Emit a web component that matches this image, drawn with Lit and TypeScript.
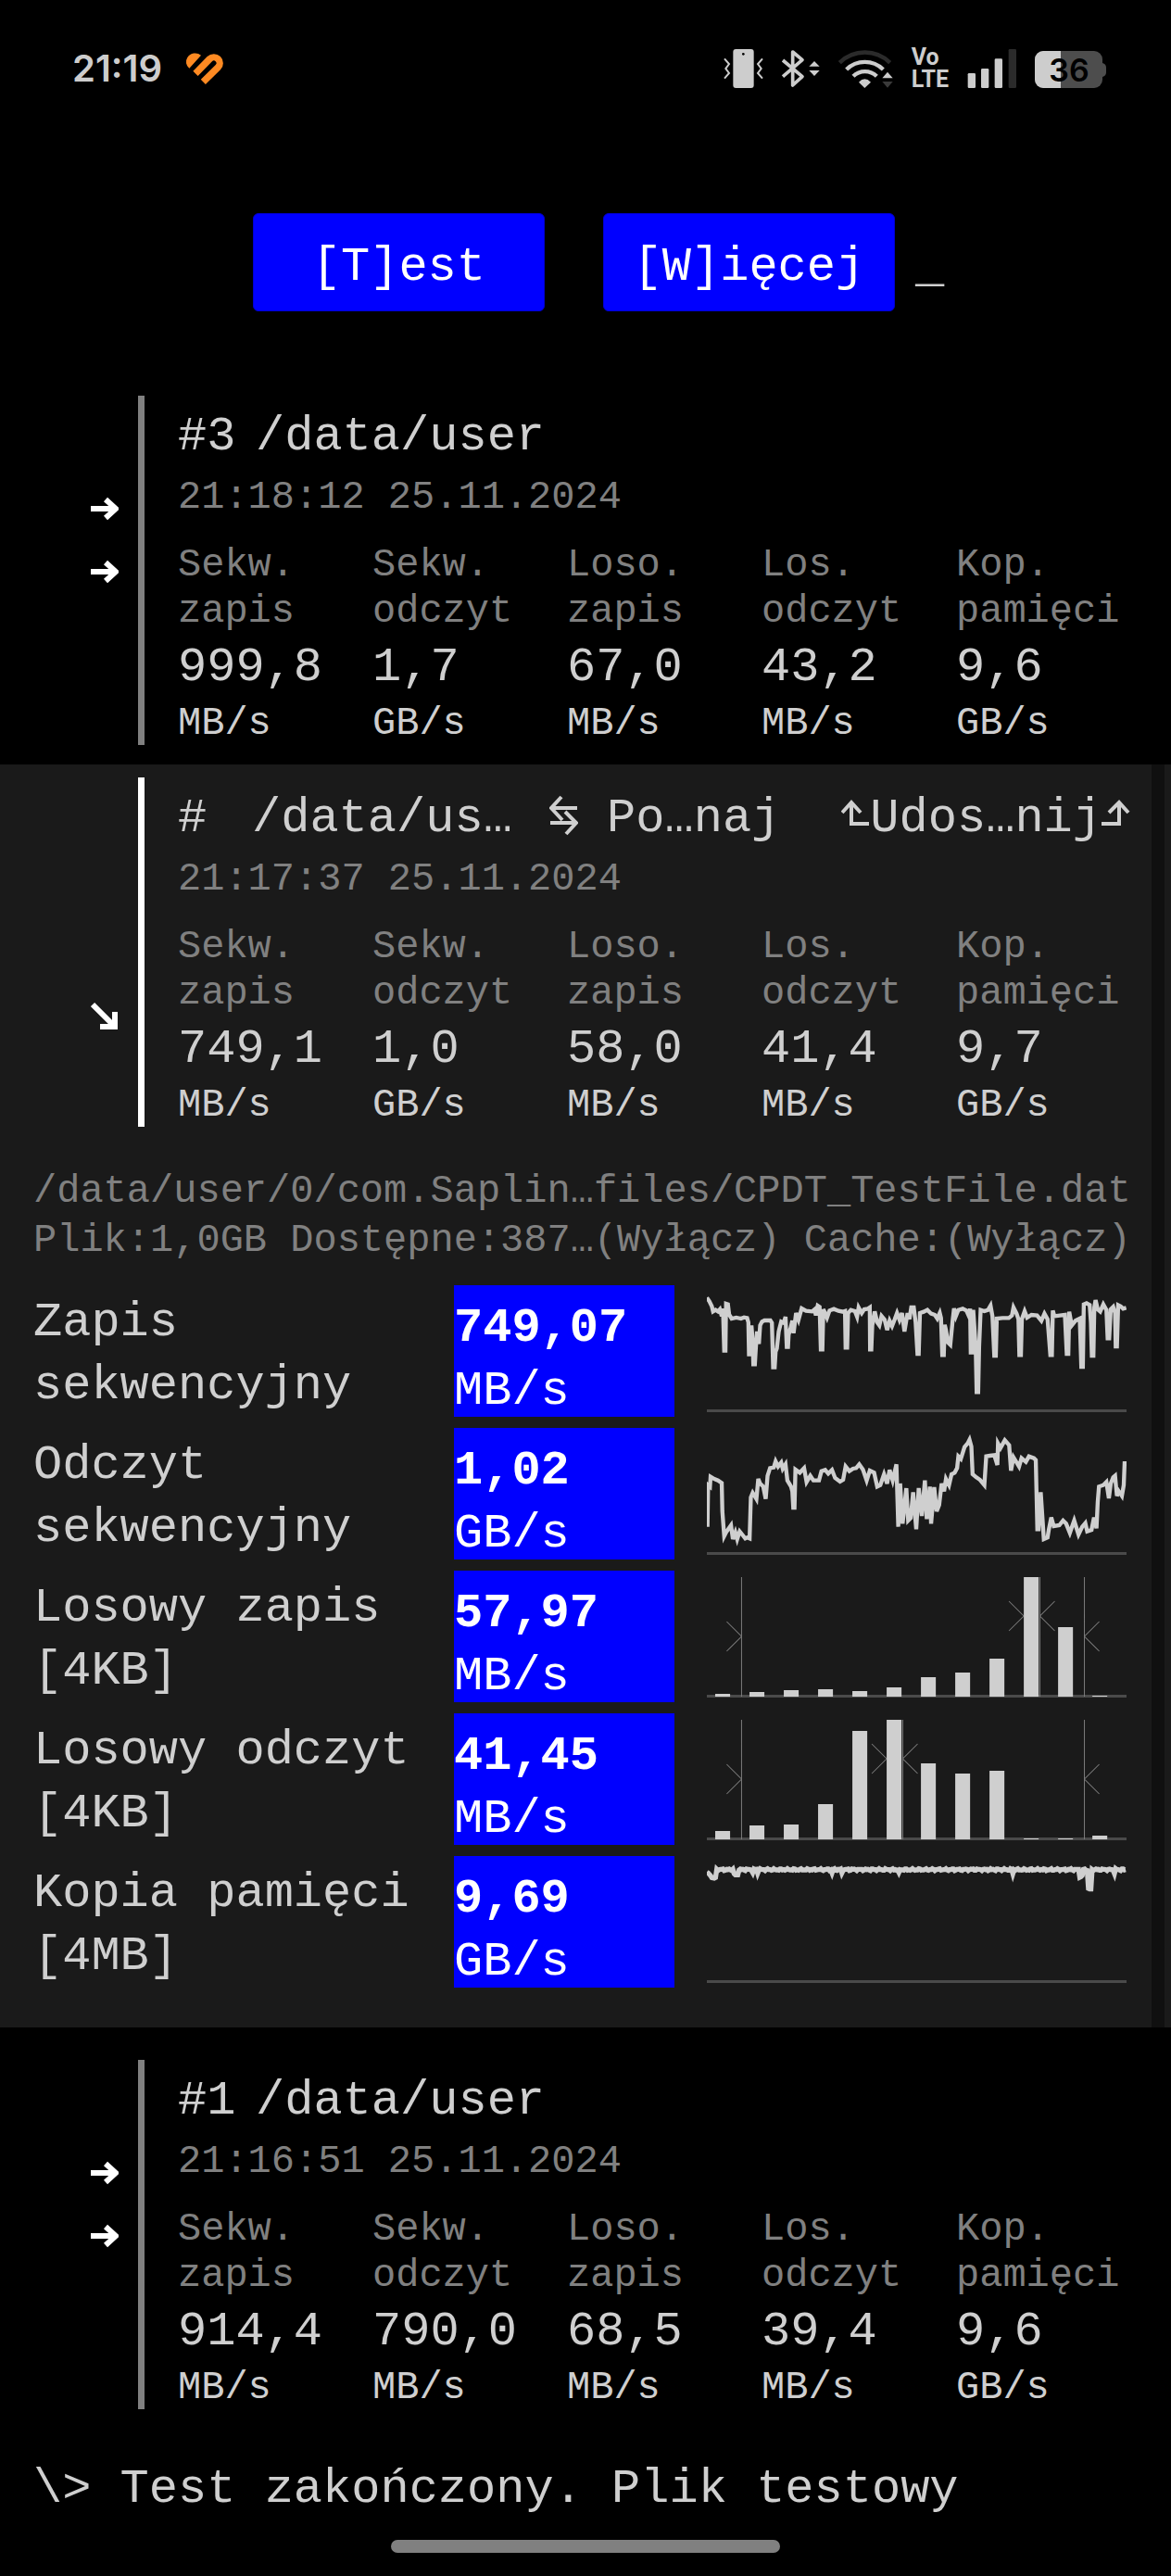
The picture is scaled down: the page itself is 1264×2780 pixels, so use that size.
import { LitElement, html, svg, css, nothing } from "lit";
import { customElement, property } from "lit/decorators.js";

type Metric = { head: string[]; value: string; unit: string };
type Result = { n: string; path: string; time: string; metrics: Metric[] };

const HEADS = [["Sekw.", "zapis"], ["Sekw.", "odczyt"], ["Loso.", "zapis"], ["Los.", "odczyt"], ["Kop.", "pamięci"]];

const result = (n: string, path: string, time: string, values: string[]): Result => ({
  n,
  path,
  time,
  metrics: values.map((v, i) => {
    const [value, unit] = v.split(" ");
    return { head: HEADS[i], value, unit };
  }),
});

const FIRST = result("3", "/data/user", "21:18:12 25.11.2024", ["999,8 MB/s", "1,7 GB/s", "67,0 MB/s", "43,2 MB/s", "9,6 GB/s"]);
const OPEN = result("", "/data/us…", "21:17:37 25.11.2024", ["749,1 MB/s", "1,0 GB/s", "58,0 MB/s", "41,4 MB/s", "9,7 GB/s"]);
const LAST = result("1", "/data/user", "21:16:51 25.11.2024", ["914,4 MB/s", "790,0 MB/s", "68,5 MB/s", "39,4 MB/s", "9,6 GB/s"]);

const WRITE_LINE =
  "0,40 8,52 16,68 20,85 28,80 36,85 42,78 48,100 52,75 56,212 60,212 62,60 68,62 72,95 80,108 95,105 110,108 120,104 130,106 134,120 136,224 141,224 144,130 148,180 150,256 155,256 158,205 162,150 168,190 172,130 178,118 186,114 205,114 210,122 214,266 219,266 222,215 226,205 232,150 240,118 248,122 254,102 258,200 262,200 264,160 270,140 276,115 280,155 288,90 296,112 306,75 320,83 340,85 348,78 352,98 358,66 364,70 368,208 373,208 376,78 384,95 388,105 396,82 410,77 425,83 440,86 446,84 448,202 453,202 456,90 465,80 478,84 485,102 490,72 500,90 508,78 520,76 526,72 527,208 531,208 534,130 542,85 550,120 557,130 564,100 574,112 582,145 590,115 598,132 606,112 614,90 622,112 630,90 638,150 648,90 654,110 660,72 668,72 674,120 680,222 684,222 688,90 700,86 712,80 724,92 736,96 744,108 752,90 756,106 760,226 765,226 768,128 772,145 778,185 786,193 794,110 798,75 804,100 812,80 826,76 838,82 846,100 850,76 852,218 857,218 860,80 868,200 871,346 876,346 879,200 884,80 896,84 908,80 916,66 922,100 928,228 933,228 936,108 955,106 975,106 985,98 990,72 1000,92 1006,110 1009,226 1014,226 1017,110 1026,84 1034,105 1048,96 1066,98 1080,115 1090,92 1100,110 1109,226 1114,226 1117,82 1122,100 1140,98 1156,96 1162,222 1167,222 1170,86 1178,130 1190,115 1204,108 1209,264 1214,264 1217,62 1226,58 1236,64 1240,120 1243,228 1248,228 1251,72 1255,48 1262,78 1270,85 1280,62 1290,80 1294,172 1299,172 1304,78 1312,70 1318,90 1320,198 1324,198 1328,64 1336,68 1344,76 1354,73";

const READ_LINE =
  "2,320 4,185 10,190 12,158 24,165 36,170 48,178 50,270 56,350 62,338 78,315 84,360 92,338 98,360 106,335 114,345 124,358 130,355 138,358 142,225 148,210 160,230 166,165 172,180 182,190 190,230 196,155 204,130 216,128 222,108 230,125 240,112 245,132 254,118 260,170 272,190 276,205 279,258 283,258 286,135 300,145 314,130 322,175 334,155 344,170 362,170 370,140 382,136 392,148 404,136 414,162 430,174 440,168 448,125 460,140 472,132 482,130 492,118 504,135 516,170 526,138 540,145 550,190 560,185 572,150 582,180 590,136 600,170 612,118 618,320 624,180 632,310 644,195 650,300 658,292 666,208 676,328 684,195 694,285 704,170 710,295 720,190 724,310 734,192 742,270 750,250 758,180 766,205 772,165 782,185 790,150 800,145 808,130 812,92 820,100 832,62 842,50 848,38 854,60 858,150 870,160 882,168 896,185 902,92 914,90 928,88 938,120 940,50 948,65 962,40 976,56 982,138 990,95 1008,125 1016,98 1030,110 1040,92 1056,98 1062,104 1067,328 1071,328 1078,208 1088,360 1100,355 1104,330 1112,290 1120,318 1138,315 1150,300 1160,310 1172,340 1186,300 1200,345 1212,320 1222,308 1228,335 1242,330 1250,290 1258,325 1262,240 1266,190 1280,185 1290,175 1298,228 1304,180 1312,160 1318,155 1324,220 1330,205 1340,220 1346,185 1349,108";

// Nearly flat trace: a small deterministic ripple with a few short dips.
const COPY_DIPS: Record<number, number> = { 0: 8, 4: 12, 8: 18, 12: 18, 16: 24, 20: 28, 24: 28, 28: 28, 88: 14, 92: 18, 96: 18, 100: 14, 148: 10, 164: 10, 404: 12, 436: 12, 620: 12, 988: 12, 1204: 22, 1208: 22, 1212: 20, 1232: 62, 1236: 64, 1240: 64, 1316: 12 };
const COPY_LINE = Array.from({ length: 339 }, (_, i) => {
  const x = i * 4;
  const y = 44 + Math.round(1.5 * Math.sin(i * 2.3) + 2 * Math.sin(i * 5.1)) + (COPY_DIPS[x] ?? 0);
  return `${x},${y}`;
}).join(" ");

const ROWS = [
  { label: ["Zapis", "sekwencyjny"], value: "749,07", unit: "MB/s", line: WRITE_LINE, weight: 13 },
  { label: ["Odczyt", "sekwencyjny"], value: "1,02", unit: "GB/s", line: READ_LINE, weight: 13 },
  { label: ["Losowy zapis", "[4KB]"], value: "57,97", unit: "MB/s", bars: [9, 15, 21, 24, 18, 30, 63, 78, 123, 387, 225, 3] },
  { label: ["Losowy odczyt", "[4KB]"], value: "41,45", unit: "MB/s", bars: [27, 45, 48, 114, 351, 387, 246, 213, 222, 3, 3, 12] },
  { label: ["Kopia pamięci", "[4MB]"], value: "9,69", unit: "GB/s", line: COPY_LINE, weight: 16 },
];

@customElement("status-bar")
class StatusBar extends LitElement {
  static styles = css`
    :host {
      display: flex;
      align-items: center;
      gap: 20px;
      height: 42px;
      padding: 53px 70px 0 78px;
      color: #cdcdcd;
      font-family: Inter, Roboto, sans-serif;
    }
    svg { display: block; flex: none; fill: currentColor; overflow: visible; }
    .clock { font-size: 40px; font-weight: 600; line-height: 42px; }
    .grow { flex: 1; }
    .heart { color: #ff8a22; margin-left: 6px; }
    .volte { font-family: Roboto, sans-serif; font-size: 25px; font-weight: 700; line-height: 24px; display: flex; flex-direction: column; }
    .level { font-size: 34px; font-weight: 600; fill: #000; }
  `;
  render() {
    return html`
      <span class="clock">21:19</span>
      <svg class="heart" width="40" height="34" viewBox="427 51 120 102" aria-hidden="true">
        <path d="M437 101 A26 26 0 0 1 431 66 A30 30 0 0 1 475 59 Z" />
        <path d="M457 118 L503 71 A19 19 0 0 1 530 98 L482 145" fill="none" stroke="currentColor" stroke-width="22" />
      </svg>
      <span class="grow"></span>
      <svg width="43" height="42" viewBox="129 69 129 126" role="img" aria-label="Wibracje">
        <rect x="160" y="69" width="67" height="126" rx="9" />
        <circle cx="193" cy="85" r="4" fill="#000" />
        <path d="M132 100 L147 117 L136 132 L147 147 L132 164 M255 100 L240 117 L251 132 L240 147 L255 164" fill="none" stroke="currentColor" stroke-width="6" />
      </svg>
      <svg width="41" height="42" viewBox="321 69 123 126" role="img" aria-label="Bluetooth">
        <path d="M324 105 L387 158 L356 186 V78 L387 104 L324 158" fill="none" stroke="currentColor" stroke-width="11" stroke-linejoin="round" />
        <path d="M409 125 L426 108 L443 125 Z M409 138 L426 156 L443 138 Z" />
      </svg>
      <svg width="59" height="42" viewBox="498 69 177 126" role="img" aria-label="Wi-Fi">
        <g fill="none" stroke="currentColor" stroke-width="13">
          <path d="M502 113 A116 116 0 0 1 665 113" stroke="#2b2b2b" />
          <path d="M524 135 A85 85 0 0 1 643 135" />
          <path d="M546 157 A54 54 0 0 1 622 157" />
        </g>
        <path d="M564 176 Q583 156 603 176 L583 195 Z" />
        <path d="M640 163 L657 143 L674 163 Z" />
        <path d="M640 174 L657 194 L674 174 Z" fill="#3a3a3a" />
      </svg>
      <span class="volte"><span>Vo</span><span>LTE</span></span>
      <svg width="53" height="42" viewBox="912 69 159 126" role="img" aria-label="Zasięg">
        <rect x="914" y="147" width="25" height="48" rx="4" />
        <rect x="957" y="132" width="25" height="63" rx="4" />
        <rect x="1001" y="100" width="25" height="95" rx="4" />
        <rect x="1046" y="69" width="25" height="126" rx="4" fill="#2b2b2b" />
      </svg>
      <svg width="77" height="42" viewBox="0 0 77 42" role="img" aria-label="Bateria 36%">
        <rect x="0" y="2" width="73" height="40" rx="9" fill="#4d4d4d" />
        <path d="M28 2 H9 A9 9 0 0 0 0 11 V33 A9 9 0 0 0 9 42 H28 Z" />
        <path d="M73 15 Q77 16 77 20 V25 Q77 29 73 30 Z" fill="#4d4d4d" />
        <text class="level" x="37" y="35" text-anchor="middle">36</text>
      </svg>
    `;
  }
}

@customElement("result-card")
class ResultCard extends LitElement {
  @property({ attribute: false }) result!: Result;
  @property({ type: Boolean, reflect: true }) open = false;

  static styles = css`
    :host { display: flex; padding: 14px 0 21px; color: #cfcfcf; }
    .gutter { box-sizing: border-box; width: 149px; flex: none; padding: 88px 21px 0 0; display: flex; flex-direction: column; align-items: flex-end; }
    :host([open]) .gutter { padding-top: 224px; }
    .arrow { display: block; width: 30px; height: 68px; stroke: #fff; stroke-width: 6; fill: none; }
    .body { flex: 1; min-width: 0; border-left: 7px solid #808080; padding: 15px 0 0 36px; }
    :host([open]) .body { border-color: #fff; }
    .title { display: flex; height: 60px; line-height: 60px; font-size: 52px; white-space: pre; }
    .num { width: 84px; flex: none; }
    :host([open]) .num { width: 80px; }
    .action { display: flex; font: inherit; color: inherit; background: none; border: 0; padding: 0; margin: 0 0 0 40px; cursor: pointer; }
    .share { margin: 0 22px 0 auto; }
    .glyph { display: block; width: 31px; height: 60px; fill: none; stroke: currentColor; stroke-width: 4; }
    .time { margin-top: 7px; line-height: 56px; font-size: 42px; color: #808080; }
    .metrics { display: grid; grid-template-columns: repeat(5, 1fr); margin-top: 20px; }
    .metric { display: flex; flex-direction: column; font-size: 42px; line-height: 50px; }
    .head { color: #808080; }
    .value { margin-top: 6px; font-size: 52px; line-height: 60px; }
    .unit { margin-top: 7px; line-height: 46px; }
  `;

  private arrow(down: boolean) {
    return html`<svg class="arrow" viewBox="0 0 30 68" aria-hidden="true">
      ${down ? svg`<path d="M2 21 L25 44 M10 45 H26 V29" />` : svg`<path d="M0 34 H27 M16 24 L27 34 L16 44" />`}
    </svg>`;
  }

  private actions() {
    return html`
      <button class="action" aria-label="Porównaj">
        <svg class="glyph" viewBox="0 0 31 60"><path d="M30 18 H3 M13 6 L2 18 L14 31 M1 34 H28 M18 46 L29 34 L17 22" /></svg> Po…naj</button>
      <button class="action share" aria-label="Udostępnij">
        <svg class="glyph" viewBox="0 0 31 60"><path d="M11 12 V35 H30 M1 23 L11 12 L21 23" /></svg>Udos…nij<svg class="glyph" viewBox="0 0 31 60"><path d="M19 12 V35 H0 M8 23 L19 12 L29 23" /></svg>
      </button>`;
  }

  render() {
    const r = this.result;
    return html`
      <div class="gutter">${this.open ? this.arrow(true) : [this.arrow(false), this.arrow(false)]}</div>
      <div class="body">
        <div class="title"><span class="num">#${r.n}</span><span>${r.path}</span>${this.open ? this.actions() : nothing}</div>
        <div class="time">${r.time}</div>
        <div class="metrics">
          ${r.metrics.map(
            (m) => html`<div class="metric">
              <span class="head">${m.head[0]}</span><span class="head">${m.head[1]}</span>
              <span class="value">${m.value}</span><span class="unit">${m.unit}</span>
            </div>`
          )}
        </div>
      </div>`;
  }
}

@customElement("result-chart")
class ResultChart extends LitElement {
  @property({ attribute: false }) line?: string;
  @property({ attribute: false }) bars?: number[];
  @property({ type: Number }) weight = 10;

  static styles = css`
    :host { display: block; }
    svg { display: block; width: 100%; height: 142px; fill: #cfcfcf; }
    .base { fill: #4a4a4a; }
    .trace { fill: none; stroke: #cfcfcf; stroke-linejoin: miter; }
    .mark { fill: none; stroke: #7c7c7c; stroke-width: 3; }
  `;

  private histogram(bars: number[]) {
    const peak = 27 + 110.7 * bars.indexOf(Math.max(...bars));
    const right = (x: number, y: number) => `M${x - 48} ${y - 48} L${x} ${y} L${x - 48} ${y + 48}`;
    const left = (x: number, y: number) => `M${x + 48} ${y - 48} L${x} ${y} L${x + 48} ${y + 48}`;
    return svg`
      <path class="mark" d="M112 21 V408 M1219 21 V408 M${peak + 52} 21 V408 ${right(112, 213)} ${left(1219, 213)} ${right(peak, 147)} ${left(peak + 52, 147)}" />
      ${bars.map((h, i) => svg`<rect x=${27 + 110.7 * i} y=${408 - h} width="48" height=${h} />`)}`;
  }

  render() {
    return html`<svg viewBox="0 0 1355 426" preserveAspectRatio="none" aria-hidden="true">
      <rect class="base" x="0" y="402" width="1355" height="9" />
      ${this.bars ? this.histogram(this.bars) : svg`<polyline class="trace" stroke-width=${this.weight} points=${this.line ?? ""} />`}
    </svg>`;
  }
}

@customElement("app-root")
class AppRoot extends LitElement {
  static styles = css`
    :host {
      display: flex;
      flex-direction: column;
      box-sizing: border-box;
      min-height: 100vh;
      background: #000;
      color: #cfcfcf;
      font-family: "Liberation Mono", "DejaVu Sans Mono", monospace;
      font-size: 52px;
      overflow: hidden;
    }
    .toolbar { display: flex; justify-content: center; margin-top: 135px; padding-left: 28px; }
    .btn {
      width: 315px; height: 106px; padding: 10px 0 0; margin-right: 63px;
      border: 1px solid #0000d0; border-radius: 6px;
      background: #00f; color: #fff; font: inherit; cursor: pointer;
    }
    .btn.more { margin-right: 22px; }
    .cursor { align-self: flex-end; line-height: 92px; }
    .list { display: flex; flex-direction: column; margin-top: 77px; }
    .closed { margin-right: 22px; }
    .closed.last { margin-top: 21px; }
    .panel { display: flex; background: #1a1a1a; padding-right: 7px; }
    .content { flex: 1; min-width: 0; padding-bottom: 43px; }
    .track { width: 14px; flex: none; background: #101010; }
    .selected { margin-right: 1px; }
    .info { padding: 23px 0 21px 36px; font-size: 42px; line-height: 53px; color: #808080; white-space: nowrap; }
    .rows { display: flex; flex-direction: column; gap: 12px; padding: 0 27px 0 36px; }
    .row { display: grid; grid-template-columns: 454fr 238fr 488fr; height: 142px; }
    .label, .speed { display: flex; flex-direction: column; gap: 14px; line-height: 54px; white-space: nowrap; }
    .label { padding-top: 14px; }
    .speed { padding-top: 20px; background: #00f; color: #fff; }
    .chart { margin-left: 35px; }
    .prompt { padding: 36px 36px 0; line-height: 60px; }
    .home { width: 420px; height: 14px; margin: 24px auto 25px; border-radius: 7px; background: #808080; }
  `;

  render() {
    return html`
      <status-bar></status-bar>
      <nav class="toolbar">
        <button class="btn">[T]est</button>
        <button class="btn more">[W]ięcej</button>
        <span class="cursor">_</span>
      </nav>
      <main class="list">
        <result-card class="closed" .result=${FIRST}></result-card>
        <section class="panel">
          <div class="content">
            <result-card class="selected" open .result=${OPEN}></result-card>
            <div class="info">
              <div>/data/user/0/com.Saplin…files/CPDT_TestFile.dat</div>
              <div>Plik:1,0GB Dostępne:387…(Wyłącz) Cache:(Wyłącz)</div>
            </div>
            <div class="rows">
              ${ROWS.map(
                (r) => html`<div class="row">
                  <div class="label">${r.label.map((l) => html`<span>${l}</span>`)}</div>
                  <div class="speed"><b>${r.value}</b><span>${r.unit}</span></div>
                  <result-chart class="chart" .line=${r.line} .bars=${r.bars} .weight=${r.weight ?? 10}></result-chart>
                </div>`
              )}
            </div>
          </div>
          <div class="track"></div>
        </section>
        <result-card class="closed last" .result=${LAST}></result-card>
      </main>
      <div class="prompt">\\&gt; Test zakończony. Plik testowy</div>
      <div class="home"></div>
    `;
  }
}
